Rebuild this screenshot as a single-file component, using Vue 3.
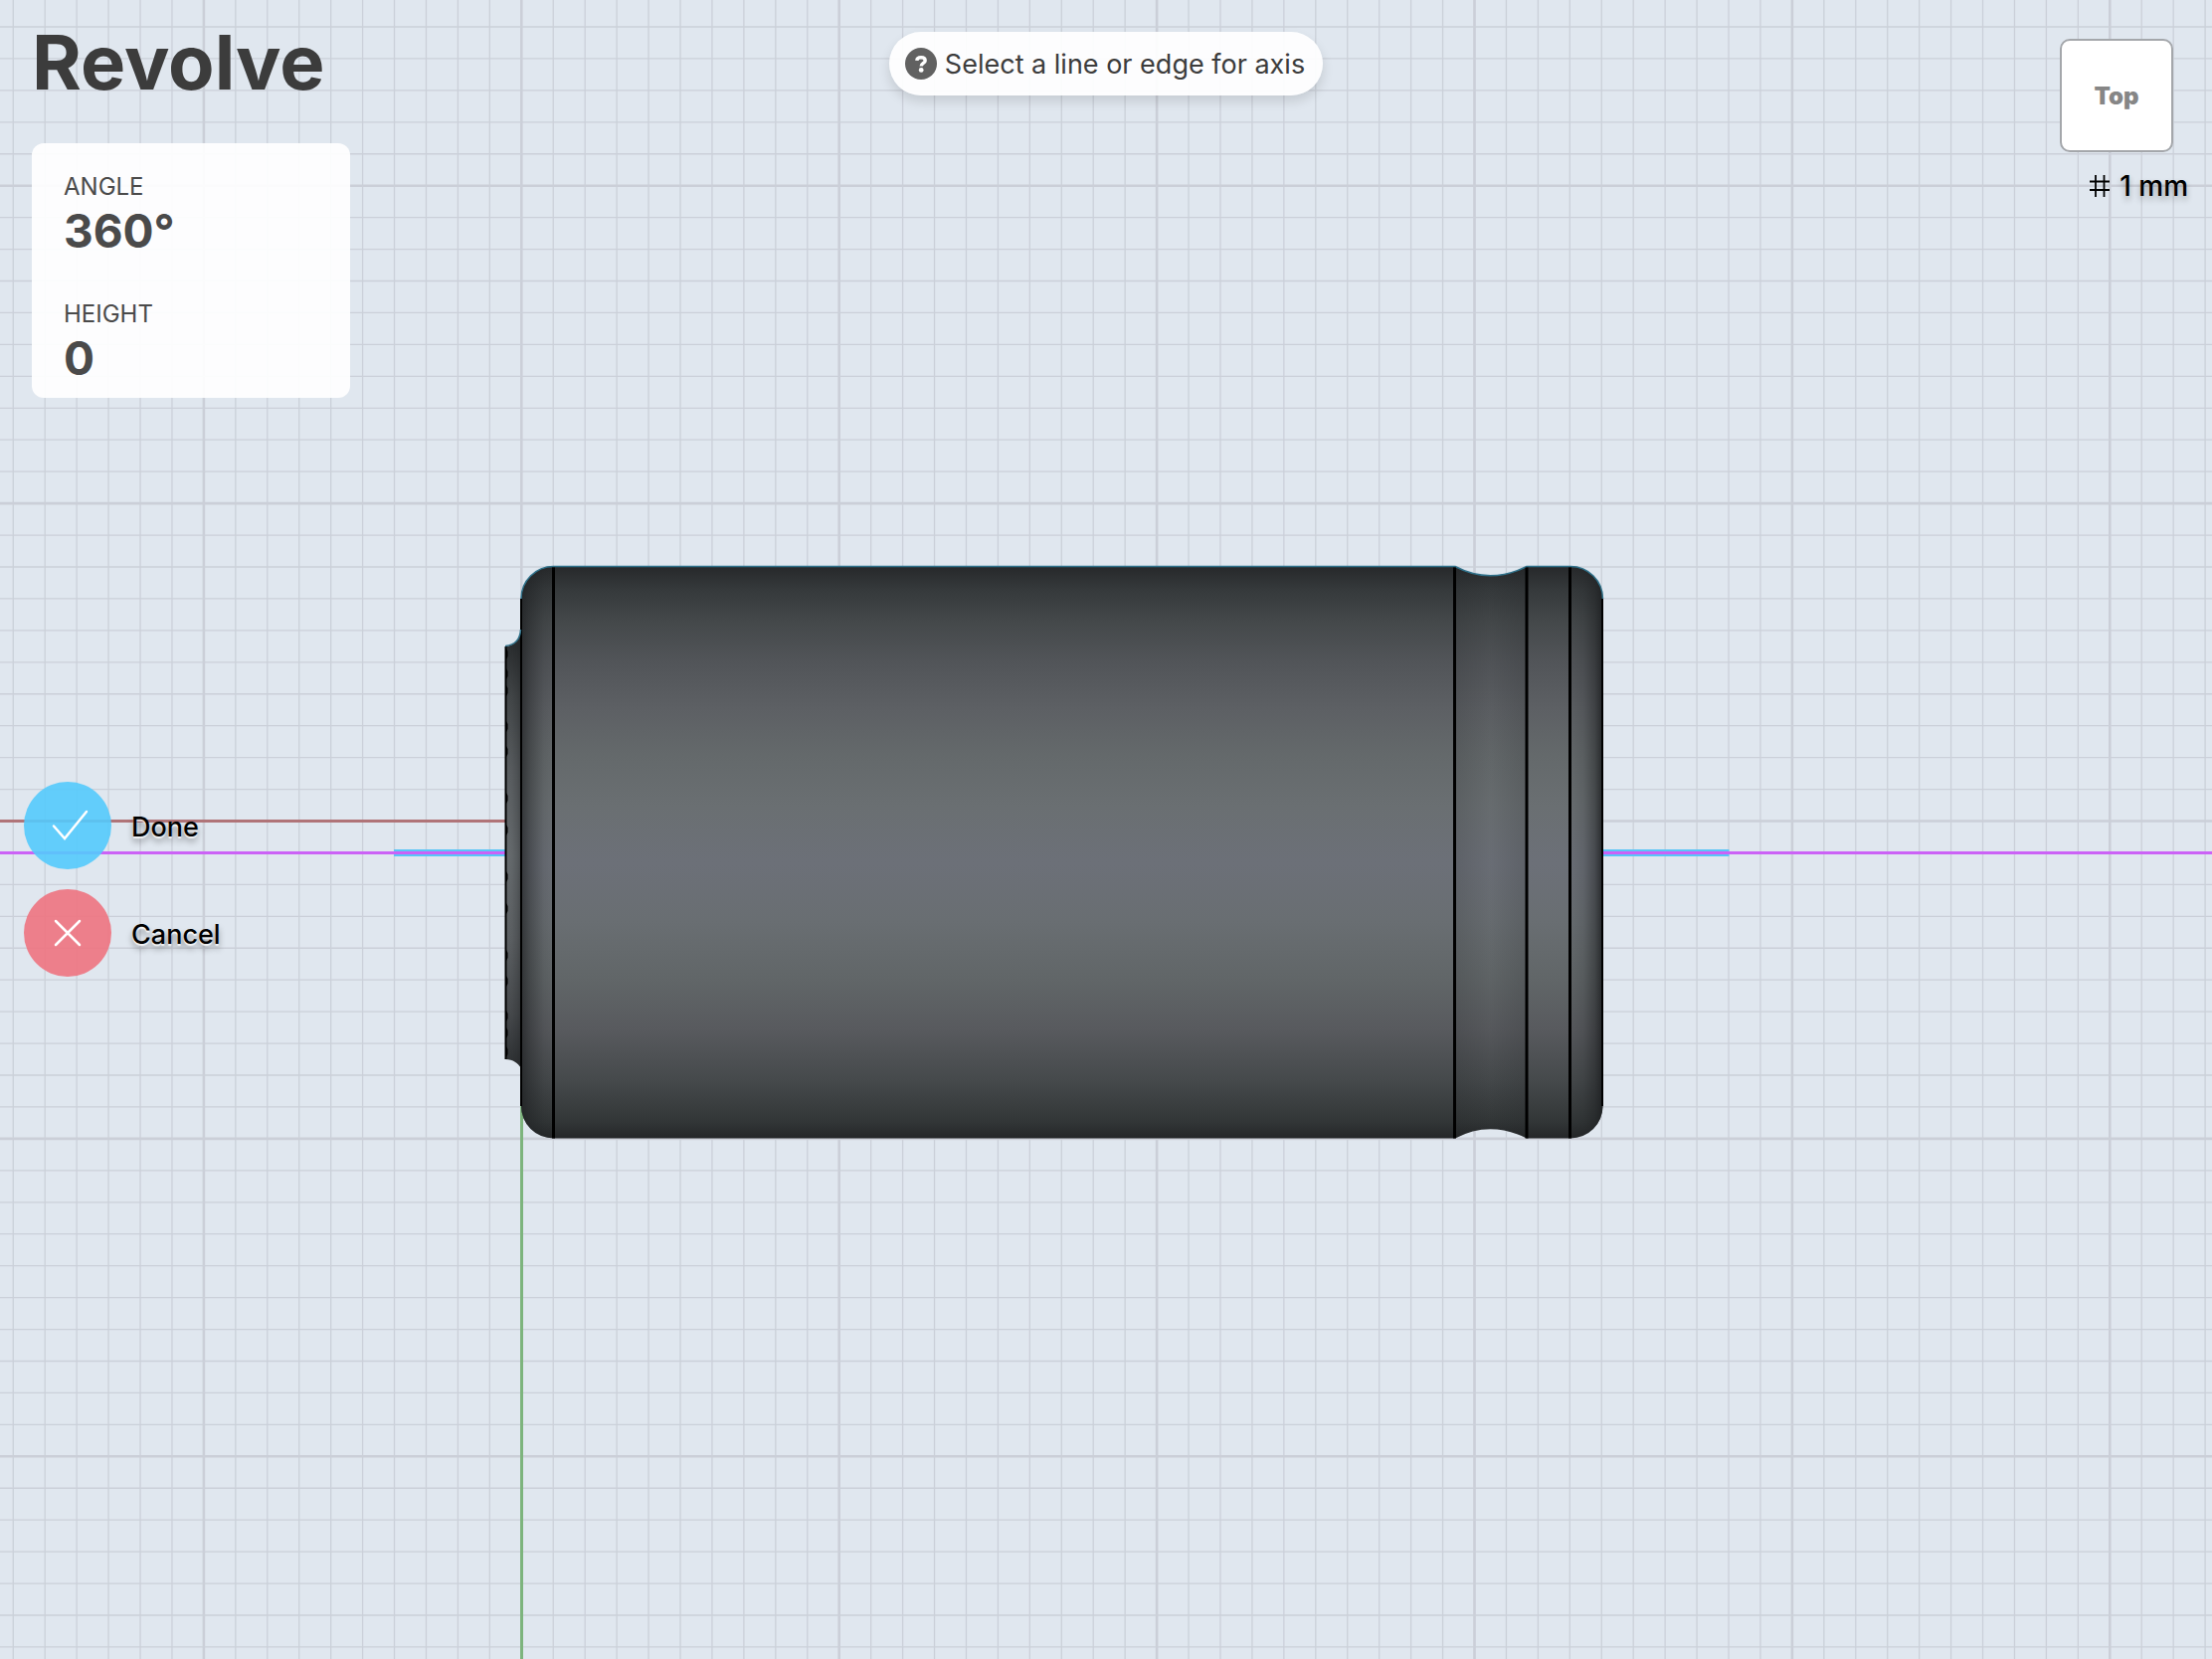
<script setup>
import { ref, computed } from "vue"

const angle = ref("360°")
const height = ref("0")

const cell = 31.94
const origin = { x: 524.3, y: 825.5 }

function gridLines(start, from, to) {
  const lines = []
  for (let i = from; i <= to; i++) {
    lines.push({ key: i, pos: start + i * cell, major: i % 10 == 0 })
  }
  return lines
}

const columns = computed(() => gridLines(origin.x, -16, 53))
const rows = computed(() => gridLines(origin.y, -25, 26))

// small notches on the rim of the cap
const notches = [657, 677, 694, 730, 755, 802, 834, 881, 913, 960, 986, 1021, 1038, 1057]
const seams = [556.5, 1462.5, 1535, 1578.5]
</script>

<template>
  <main class="app">
    <svg
      class="scene"
      viewBox="0 0 2224 1668"
      preserveAspectRatio="xMidYMid slice"
      aria-hidden="true"
    >
      <defs>
        <linearGradient id="shade" x1="0" y1="569" x2="0" y2="1145" gradientUnits="userSpaceOnUse">
          <stop offset="0" stop-color="#26282a" />
          <stop offset="0.04" stop-color="#35393b" />
          <stop offset="0.1" stop-color="#45494b" />
          <stop offset="0.17" stop-color="#525559" />
          <stop offset="0.25" stop-color="#5d6064" />
          <stop offset="0.33" stop-color="#64696b" />
          <stop offset="0.42" stop-color="#6a6f72" />
          <stop offset="0.52" stop-color="#6c7078" />
          <stop offset="0.62" stop-color="#696e72" />
          <stop offset="0.72" stop-color="#616668" />
          <stop offset="0.81" stop-color="#585a5e" />
          <stop offset="0.9" stop-color="#45494b" />
          <stop offset="0.97" stop-color="#323637" />
          <stop offset="1" stop-color="#242628" />
        </linearGradient>
        <linearGradient id="capLeft">
          <stop offset="0" stop-color="#1b1d1f" stop-opacity="0.7" />
          <stop offset="0.3" stop-color="#1b1d1f" stop-opacity="0.4" />
          <stop offset="0.7" stop-color="#1b1d1f" stop-opacity="0.12" />
          <stop offset="1" stop-color="#1b1d1f" stop-opacity="0.04" />
        </linearGradient>
        <linearGradient id="capRight">
          <stop offset="0" stop-color="#1b1d1f" stop-opacity="0.04" />
          <stop offset="0.4" stop-color="#1b1d1f" stop-opacity="0.15" />
          <stop offset="0.75" stop-color="#1b1d1f" stop-opacity="0.45" />
          <stop offset="1" stop-color="#1b1d1f" stop-opacity="0.85" />
        </linearGradient>
        <linearGradient id="groove">
          <stop offset="0" stop-color="#1b1d1f" stop-opacity="0.18" />
          <stop offset="0.5" stop-color="#1b1d1f" stop-opacity="0.04" />
          <stop offset="1" stop-color="#1b1d1f" stop-opacity="0.18" />
        </linearGradient>
        <linearGradient id="rim" x1="0" y1="650" x2="0" y2="1070" gradientUnits="userSpaceOnUse">
          <stop offset="0" stop-color="#2b2e30" />
          <stop offset="0.12" stop-color="#44484a" />
          <stop offset="0.3" stop-color="#5c6063" />
          <stop offset="0.5" stop-color="#696e71" />
          <stop offset="0.7" stop-color="#5f6366" />
          <stop offset="0.88" stop-color="#484b4e" />
          <stop offset="1" stop-color="#2f3234" />
        </linearGradient>
      </defs>

      <line
        v-for="line in columns"
        :key="'c' + line.key"
        :class="line.major ? 'major' : 'minor'"
        :x1="line.pos"
        :x2="line.pos"
        y1="0"
        y2="1668"
      />
      <line
        v-for="line in rows"
        :key="'r' + line.key"
        :class="line.major ? 'major' : 'minor'"
        :y1="line.pos"
        :y2="line.pos"
        x1="0"
        x2="2224"
      />

      <path class="axisX" d="M0 825.5H510" />
      <path class="axisY" d="M524.5 1110V1668" />
      <path class="pick" d="M396 857.5H510M1610 857.5H1738.5" />
      <path class="guide" d="M0 857.5H510M1610 857.5H2224" />

      <!-- cap rim -->
      <path fill="url(#rim)" d="M508 650C518 649 523 643 524 633V1074C521 1069 516 1065 508 1065Z" />
      <path fill="url(#capRight)" opacity="0.5" d="M508 650C518 649 523 643 524 633V1074C521 1069 516 1065 508 1065Z" />
      <path class="outline" d="M508.5 650V1065" />
      <path
        v-for="y in notches"
        :key="y"
        :d="`M509 ${y - 5}l1.5 3v5l-1.5 3z`"
      />

      <!-- can body -->
      <path
        fill="url(#shade)"
        d="M524 602A32.5 32.5 0 0 1 556.5 569.5H1463Q1498 588 1535 569.5H1579A32.5 32.5 0 0 1 1611.5 602V1112A32.5 32.5 0 0 1 1579 1144.5H1535Q1498 1126 1463 1144.5H556.5A32.5 32.5 0 0 1 524 1112Z"
      />
      <path fill="url(#capLeft)" d="M524 602A32.5 32.5 0 0 1 556.5 569.5V1144.5A32.5 32.5 0 0 1 524 1112Z" />
      <path fill="url(#groove)" d="M1463 569.5Q1498 588 1535 569.5V1144.5Q1498 1126 1463 1144.5Z" />
      <path fill="url(#capRight)" d="M1579 569.5A32.5 32.5 0 0 1 1611.5 602V1112A32.5 32.5 0 0 1 1579 1144.5Z" />
      <path class="outline" d="M524 602V1112M1611 602V1112" />
      <path
        class="glow"
        d="M508 649.5C518 648.5 523 643 523.5 633M524 602A32.5 32.5 0 0 1 556.5 569.5H1463Q1498 588 1535 569.5H1579A32.5 32.5 0 0 1 1611.5 602"
      />
      <line
        v-for="x in seams"
        :key="x"
        class="seam"
        :x1="x"
        :x2="x"
        y1="570.5"
        y2="1144.5"
      />
    </svg>

    <div class="top">
      <section class="tool">
        <h1>Revolve</h1>
        <div class="card">
          <div class="field">
            <label for="angle">ANGLE</label>
            <input id="angle" v-model="angle" type="text">
          </div>
          <div class="field">
            <label for="height">HEIGHT</label>
            <input id="height" v-model="height" type="text">
          </div>
        </div>
      </section>

      <div class="hint">
        <svg width="32" height="32" viewBox="0 0 32 32" aria-hidden="true">
          <circle cx="16" cy="16" r="16" fill="#616161" />
          <path
            d="M11.8 12.8C12 10.6 13.6 9.8 16 9.8C18.5 9.8 20.2 10.9 20.2 12.9C20.2 15.4 16.2 15.4 16.2 18.6"
            fill="none"
            stroke="#fff"
            stroke-width="3.4"
          />
          <circle cx="16.2" cy="22.4" r="2.4" fill="#fff" />
        </svg>
        <span>Select a line or edge for axis</span>
      </div>

      <aside class="view">
        <button class="cube" type="button">Top</button>
        <div class="unit">
          <svg width="20" height="24" viewBox="0 0 20 24" aria-hidden="true">
            <path d="M6 1V23M14.5 1V23M0 7.5H20M0 16H20" stroke="#000" stroke-width="1.8" />
          </svg>
          <span>1 mm</span>
        </div>
      </aside>
    </div>

    <div class="actions">
      <button class="action" type="button">
        <span class="circle done">
          <svg width="36" height="32" viewBox="0 0 36 32" aria-hidden="true">
            <path d="M4 16.5L15 29L37 2" />
          </svg>
        </span>
        <span class="name">Done</span>
      </button>
      <button class="action" type="button">
        <span class="circle cancel">
          <svg width="28" height="28" viewBox="0 0 28 28" aria-hidden="true">
            <path d="M2 2L26 26M26 2L2 26" />
          </svg>
        </span>
        <span class="name">Cancel</span>
      </button>
    </div>
  </main>
</template>

<style>
body {
  margin: 0;
  background-color: #e0e7ef;
}
</style>

<style scoped>
.app {
  position: relative;
  min-height: 100vh;
  overflow: hidden;
  box-sizing: border-box;
  padding: 32px 24px;
  font-family: Inter, "Liberation Sans", sans-serif;
  color: #3c3c3c;
}

.scene {
  position: absolute;
  top: 0;
  left: 0;
  width: 100%;
  height: 100%;
}

.minor {
  stroke: #cbd0d9;
  stroke-width: 1.3;
}

.major {
  stroke: #cbcfd8;
  stroke-width: 2.6;
}

.axisX {
  stroke: #b07478;
  stroke-width: 3;
}

.axisY {
  stroke: #7db47d;
  stroke-width: 3;
}

.pick {
  stroke: #58c5f8;
  stroke-width: 7;
}

.guide {
  stroke: #cb62f6;
  stroke-width: 3;
}

.outline {
  fill: none;
  stroke: #000;
  stroke-width: 2;
}

.seam {
  stroke: #000;
  stroke-width: 3;
}

.glow {
  fill: none;
  stroke: #2f718a;
  stroke-width: 1.5;
}

.top {
  position: relative;
  display: grid;
  grid-template-columns: 1fr auto 1fr;
  align-items: start;
}

.tool {
  padding-left: 8px;
}

h1 {
  margin: 0 0 52px;
  font-size: 76px;
  line-height: 60px;
  font-weight: 700;
}

.card {
  box-sizing: border-box;
  width: 320px;
  padding: 32px 32px 12px;
  border-radius: 12px;
  background-color: rgba(255, 255, 255, 0.92);
  display: flex;
  flex-direction: column;
  gap: 44px;
}

.field {
  display: flex;
  flex-direction: column;
  gap: 4px;
  color: #4a4a4a;
}

label {
  font-size: 24px;
  line-height: 24px;
}

input {
  width: 100%;
  height: 56px;
  padding: 0;
  border: none;
  outline: none;
  background: none;
  color: inherit;
  font: 700 46px Inter, "Liberation Sans", sans-serif;
}

.hint {
  display: flex;
  align-items: center;
  gap: 8px;
  height: 64px;
  padding: 0 18px 0 16px;
  border-radius: 32px;
  background-color: rgba(255, 255, 255, 0.92);
  box-shadow: 0 6px 12px rgba(0, 0, 0, 0.12);
  font-size: 27px;
}

.view {
  justify-self: end;
  display: flex;
  flex-direction: column;
  align-items: flex-end;
  gap: 18px;
  padding-top: 7px;
}

.cube {
  width: 114px;
  height: 114px;
  margin-right: 15px;
  border: 2px solid #a4a7ab;
  border-radius: 10px;
  background-color: #fff;
  color: #868686;
  font: 900 24px Inter, "Liberation Sans", sans-serif;
  cursor: pointer;
}

.unit {
  display: flex;
  align-items: center;
  gap: 10px;
  color: #000;
  font-size: 28px;
  line-height: 32px;
  font-weight: 500;
  text-shadow: 0 4px 6px rgba(0, 0, 0, 0.3);
}

.actions {
  position: relative;
  display: flex;
  flex-direction: column;
  align-items: flex-start;
  gap: 20px;
  margin-top: 386px;
}

.action {
  display: flex;
  align-items: center;
  gap: 20px;
  padding: 0;
  border: none;
  background: none;
  color: #000;
  font: 500 27px Inter, "Liberation Sans", sans-serif;
  cursor: pointer;
}

.name {
  padding-top: 2px;
  text-shadow: 0 2px 1px rgba(255, 255, 255, 0.8), 0 5px 6px rgba(0, 0, 0, 0.4);
}

.circle {
  display: flex;
  align-items: center;
  justify-content: center;
  width: 88px;
  height: 88px;
  border-radius: 50%;
}

.circle svg {
  overflow: visible;
}

.circle path {
  fill: none;
  stroke: #fff;
  stroke-width: 2.5;
  stroke-linecap: round;
}

.done {
  background-color: rgba(84, 202, 252, 0.9);
}

.cancel {
  background-color: rgba(238, 115, 128, 0.9);
}
</style>
